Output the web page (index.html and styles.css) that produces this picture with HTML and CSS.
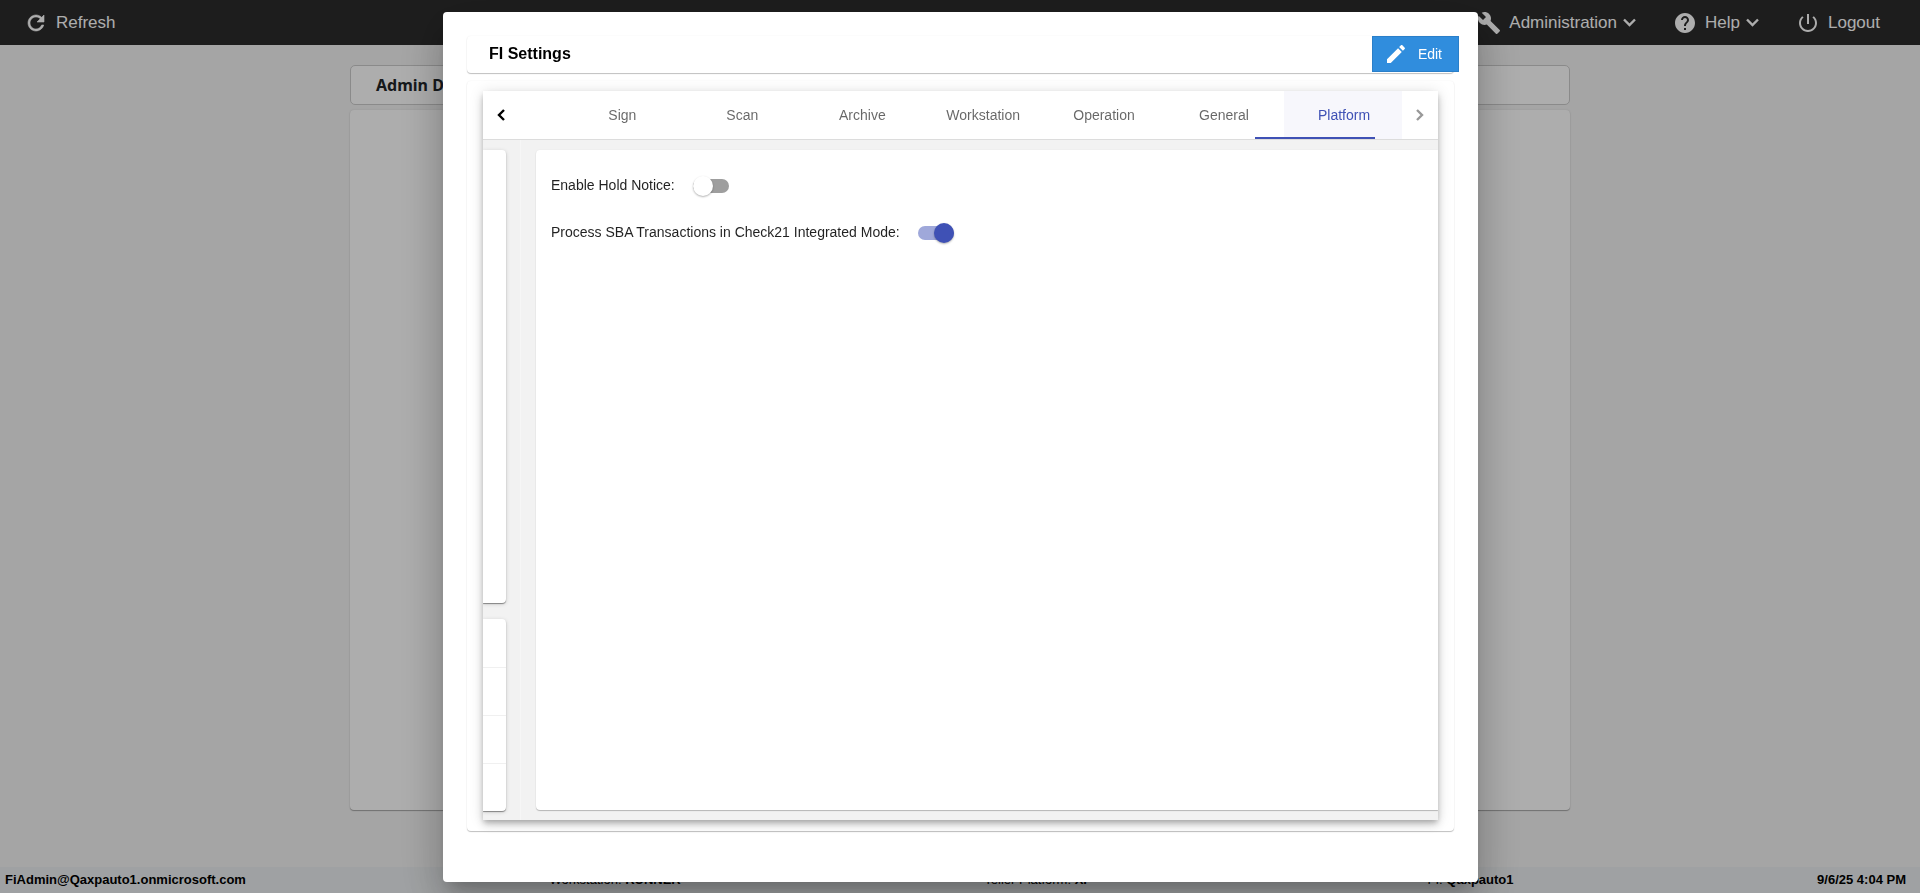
FILE: index.html
```
<!DOCTYPE html>
<html lang="en">
  <head>
    <meta charset="utf-8">
    <meta name="viewport" content="width=device-width, initial-scale=1">
    <title>FI Settings</title>
    <link rel="stylesheet" href="styles.css">
  </head>
  <body>
    <div class="page">
      <header class="topbar">
        <button class="nav-item" type="button">
          <svg class="icon icon-refresh" viewBox="0 0 24 24"><path d="M17.65 6.35C16.2 4.9 14.21 4 12 4c-4.42 0-7.99 3.58-7.99 8s3.57 8 7.99 8c3.73 0 6.84-2.55 7.73-6h-2.08c-.82 2.33-3.04 4-5.65 4-3.31 0-6-2.69-6-6s2.69-6 6-6c1.66 0 3.14.69 4.22 1.78L13 11h7V4l-2.35 2.35z"/></svg>
          <span>Refresh</span>
        </button>
        <nav class="nav-right">
          <button class="nav-item" type="button">
            <svg class="icon" viewBox="0 0 24 24"><path d="M22.7 19l-9.1-9.1c.9-2.3.4-5-1.5-6.9-2-2-5-2.4-7.4-1.3L9 6 6 9 1.6 4.7C.4 7.1.9 10.1 2.9 12.1c1.9 1.9 4.6 2.4 6.9 1.5l9.1 9.1c.4.4 1 .4 1.4 0l2.3-2.3c.5-.4.5-1.1.1-1.4z"/></svg>
            <span>Administration</span>
            <svg class="caret" viewBox="0 0 13 9"><path d="M1 1.500l5.500 5.500 5.500-5.500"/></svg>
          </button>
          <button class="nav-item" type="button">
            <svg class="icon" viewBox="0 0 24 24"><path d="M12 2C6.48 2 2 6.48 2 12s4.48 10 10 10 10-4.48 10-10S17.52 2 12 2zm1 17h-2v-2h2v2zm2.07-7.75l-.9.92C13.45 12.9 13 13.5 13 15h-2v-.5c0-1.1.45-2.1 1.17-2.83l1.24-1.26c.37-.36.59-.86.59-1.41 0-1.1-.9-2-2-2s-2 .9-2 2H8c0-2.21 1.79-4 4-4s4 1.79 4 4c0 .88-.36 1.68-.93 2.25z"/></svg>
            <span>Help</span>
            <svg class="caret" viewBox="0 0 13 9"><path d="M1 1.500l5.500 5.500 5.500-5.500"/></svg>
          </button>
          <button class="nav-item" type="button">
            <svg class="icon" viewBox="0 0 24 24"><path d="M13 3h-2v10h2V3zm4.830 2.170l-1.420 1.420C17.990 7.860 19 9.810 19 12c0 3.870-3.130 7-7 7s-7-3.130-7-7c0-2.190 1.010-4.140 2.580-5.420L6.170 5.170C4.230 6.820 3 9.260 3 12c0 4.970 4.030 9 9 9s9-4.030 9-9c0-2.740-1.230-5.180-3.170-6.830z"/></svg>
            <span>Logout</span>
          </button>
        </nav>
      </header>

      <main class="dashboard">
        <h1 class="dashboard-title">Admin Dashboard</h1>
        <div class="dashboard-card"></div>
      </main>

      <footer class="statusbar">
        <strong>FiAdmin@Qaxpauto1.onmicrosoft.com</strong>
        <span>Workstation: <strong>RUNNER</strong></span>
        <span class="teller">Teller Platform: <strong>XP</strong></span>
        <span>FI: <strong>Qaxpauto1</strong></span>
        <strong>9/6/25 4:04 PM</strong>
      </footer>
    </div>

    <div class="backdrop">
      <section class="dialog" role="dialog" aria-labelledby="dialog-title">
        <div class="dialog-header card">
          <h2 id="dialog-title">FI Settings</h2>
          <button class="edit-button" type="button">
            <svg viewBox="0 0 24 24"><path d="M3 17.25V21h3.75L17.81 9.94l-3.75-3.75L3 17.25zM20.71 7.04c.39-.39.39-1.02 0-1.41l-2.34-2.34c-.39-.39-1.02-.39-1.41 0l-1.83 1.83 3.75 3.75 1.83-1.83z"/></svg>
            <span>Edit</span>
          </button>
        </div>

        <div class="dialog-content card">
          <div class="tab-group">
            <div class="tab-header">
              <button class="scroll-button" type="button" aria-label="Previous tabs">
                <svg viewBox="0 0 8 12"><path d="M7 1L2 6l5 5"/></svg>
              </button>
              <div class="tab-viewport">
                <div class="tab-list" role="tablist">
                  <button class="tab" type="button" role="tab">Sign</button>
                  <button class="tab" type="button" role="tab">Scan</button>
                  <button class="tab" type="button" role="tab">Archive</button>
                  <button class="tab" type="button" role="tab">Workstation</button>
                  <button class="tab" type="button" role="tab">Operation</button>
                  <button class="tab" type="button" role="tab">General</button>
                  <button class="tab active" type="button" role="tab" aria-selected="true">Platform</button>
                  <span class="ink-bar"></span>
                </div>
              </div>
              <button class="scroll-button" type="button" aria-label="Next tabs" disabled>
                <svg viewBox="0 0 8 12"><path d="M1 1l5 5-5 5"/></svg>
              </button>
            </div>

            <div class="tab-body">
              <div class="previous-pane">
                <div class="side-card"></div>
                <div class="side-list">
                  <div></div>
                  <div></div>
                  <div></div>
                  <div></div>
                </div>
              </div>
              <div class="pane" role="tabpanel">
                <div class="settings">
                  <div class="setting">
                    <label for="hold-notice">Enable Hold Notice:</label>
                    <input class="toggle" type="checkbox" id="hold-notice">
                  </div>
                  <div class="setting">
                    <label for="sba-mode">Process SBA Transactions in Check21 Integrated Mode:</label>
                    <input class="toggle" type="checkbox" id="sba-mode" checked>
                  </div>
                </div>
              </div>
            </div>
          </div>
        </div>
      </section>
    </div>
  </body>
</html>
```
FILE: styles.css
```
* {
  box-sizing: border-box;
}
body {
  margin: 0;
  font-family: "Liberation Sans", Arial, sans-serif;
  font-size: 14px;
  color: rgba(0, 0, 0, 0.87);
}
button {
  border: 0;
  padding: 0;
  background: none;
  font: inherit;
  color: inherit;
  cursor: pointer;
}
svg {
  display: block;
  fill: currentColor;
}

/* page behind the dialog */
.page {
  display: flex;
  flex-direction: column;
  height: 100vh;
  background: #f3f3f3;
}
.topbar {
  display: flex;
  justify-content: space-between;
  height: 45px;
  padding: 0 40px 0 24px;
  background: #2c2c2c;
  color: #fff;
}
.nav-right {
  display: flex;
  gap: 37px;
}
.nav-item {
  display: flex;
  align-items: center;
  font-size: 17px;
}
.icon {
  width: 24px;
  margin-right: 8px;
}
.icon-refresh {
  stroke: currentColor;
  stroke-width: 0.6;
}
.caret {
  width: 13px;
  margin-left: 6px;
  fill: none;
  stroke: currentColor;
  stroke-width: 2.4;
}
.dashboard {
  display: flex;
  flex-direction: column;
  flex: 1;
  gap: 5px;
  width: 1220px;
  max-width: 100%;
  margin: 0 auto;
  padding: 20px 0 57px;
}
.dashboard-title {
  margin: 0;
  padding: 0 25px;
  border: 1px solid #ccc;
  border-radius: 5px;
  background: #fff;
  color: #212529;
  font: bold 16px/38px "Noto Sans", sans-serif;
}
.dashboard-card {
  flex: 1;
  border-radius: 4px;
  background: #fff;
  box-shadow: 0 1px 1px rgba(0, 0, 0, 0.3), 0 0 2px rgba(0, 0, 0, 0.1);
}
.statusbar {
  display: flex;
  justify-content: space-between;
  height: 26px;
  padding: 0 14px 0 5px;
  background: #ebeef0;
  color: #000;
  font-size: 13px;
  line-height: 25px;
}
.teller {
  padding-right: 32px;
}

/* dialog */
.backdrop {
  position: fixed;
  inset: 0;
  display: flex;
  justify-content: center;
  padding: 12px 0 11px 1px;
  background: rgba(0, 0, 0, 0.32);
}
.dialog {
  display: flex;
  flex-direction: column;
  gap: 8px;
  width: 1035px;
  max-width: 96vw;
  padding: 24px 24px 51px;
  border-radius: 4px;
  background: #fff;
  box-shadow: 0 11px 15px -7px rgba(0, 0, 0, 0.2), 0 24px 38px 3px rgba(0, 0, 0, 0.14), 0 9px 46px 8px rgba(0, 0, 0, 0.12);
}
.card {
  border-radius: 4px;
  background: #fff;
  box-shadow: 0 1px 1px rgba(0, 0, 0, 0.24), 0 0 2px rgba(0, 0, 0, 0.06);
}
.dialog-header {
  display: flex;
  justify-content: space-between;
  height: 37px;
  padding-left: 22px;
}
.dialog-header h2 {
  margin: 0;
  color: #000;
  font-size: 16px;
  line-height: 35px;
}
.edit-button {
  display: flex;
  align-items: center;
  gap: 10px;
  height: 36px;
  margin-right: -5px;
  padding: 0 16px 0 11px;
  border: 1px solid #2a7fc9;
  background: #308ddd;
  color: #fff;
}
.edit-button svg {
  width: 24px;
}
.dialog-content {
  display: flex;
  flex: 1;
  padding: 10px 16px 11px;
}
.tab-group {
  display: flex;
  flex-direction: column;
  flex: 1;
  min-width: 0;
  background: #f2f2f2;
  box-shadow: 0 3px 5px -1px rgba(0, 0, 0, 0.2), 0 5px 8px rgba(0, 0, 0, 0.14), 0 1px 14px rgba(0, 0, 0, 0.12);
}
.tab-header {
  display: flex;
  border-bottom: 1px solid #dcdcdc;
  background: #fff;
}
.scroll-button {
  display: flex;
  align-items: center;
  justify-content: center;
  width: 36px;
  color: #000;
}
.scroll-button:disabled {
  color: #999;
}
.scroll-button svg {
  width: 8px;
  fill: none;
  stroke: currentColor;
  stroke-width: 2.4;
}
.tab-viewport {
  display: flex;
  flex: 1;
  justify-content: flex-end;
  overflow: hidden;
}
.tab-list {
  position: relative;
  display: flex;
  margin-right: -2px;
}
.tab {
  min-width: 120px;
  height: 48px;
  padding: 0 24px;
  color: rgba(0, 0, 0, 0.6);
}
.tab.active {
  background: #f7f7fc;
  color: #3f51b5;
}
.ink-bar {
  position: absolute;
  right: 29px;
  bottom: 0;
  width: 120px;
  height: 2px;
  background: #3f51b5;
}
.tab-body {
  display: flex;
  flex: 1;
  overflow: hidden;
}
.previous-pane {
  display: flex;
  flex-direction: column;
  gap: 16px;
  width: 38px;
  padding: 10px 14px 9px 0;
  border-right: 1px solid #f6f6f6;
}
.side-card,
.side-list {
  border-radius: 0 4px 4px 0;
  background: #fff;
  box-shadow: 0 1px 1px rgba(0, 0, 0, 0.4), 0 1px 4px rgba(0, 0, 0, 0.16);
}
.side-card {
  flex: 1;
}
.side-list div {
  height: 48px;
}
.side-list div + div {
  border-top: 1px solid #f0f0f0;
}
.pane {
  flex: 1;
  padding: 10px 0 10px 15px;
}
.settings {
  height: 100%;
  padding: 26px 15px;
  border-radius: 4px 0 0 4px;
  background: #fff;
  box-shadow: 0 1px 1px rgba(0, 0, 0, 0.24), 0 0 2px rgba(0, 0, 0, 0.06);
}
.setting {
  display: flex;
  align-items: center;
  gap: 18px;
  height: 20px;
  margin-bottom: 27px;
}
.setting label {
  padding-bottom: 2px;
}
.toggle {
  position: relative;
  width: 36px;
  height: 14px;
  margin: 0;
  border-radius: 8px;
  appearance: none;
  background: #9e9e9e;
}
.toggle::before {
  content: "";
  position: absolute;
  top: -3px;
  left: 0;
  width: 20px;
  height: 20px;
  border-radius: 50%;
  background: #fff;
  box-shadow: 0 1px 2px rgba(0, 0, 0, 0.3);
}
.toggle:checked {
  background: #9fa8da;
}
.toggle:checked::before {
  left: 16px;
  background: #3f51b5;
}
```
